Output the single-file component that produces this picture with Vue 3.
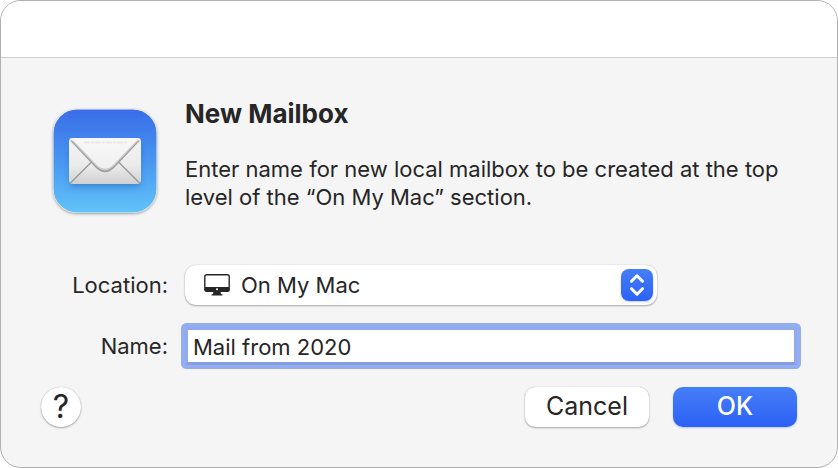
<template>
  <div class="dialog" role="dialog" aria-labelledby="dialog-title">
    <header class="title-bar"></header>

    <form class="content" @submit.prevent>
      <section class="intro">
        <!-- Mail icon -->
        <svg class="app-icon" viewBox="0 0 104 104" aria-hidden="true">
          <defs>
            <linearGradient id="sky" x1="0" y1="0" x2="0" y2="1">
              <stop offset="0" stop-color="#3b6de9" />
              <stop offset="0.5" stop-color="#4896f0" />
              <stop offset="1" stop-color="#62c3f9" />
            </linearGradient>
            <linearGradient id="paper" x1="0" y1="0" x2="0" y2="1">
              <stop offset="0" stop-color="#f4f4f4" />
              <stop offset="0.6" stop-color="#ebebeb" />
              <stop offset="1" stop-color="#d0d0d0" />
            </linearGradient>
            <linearGradient id="flap" x1="0" y1="0" x2="0" y2="1">
              <stop offset="0" stop-color="#f8f8f8" />
              <stop offset="1" stop-color="#efefef" />
            </linearGradient>
            <filter id="soft" x="-20%" y="-20%" width="140%" height="150%">
              <feGaussianBlur stdDeviation="3" />
            </filter>
            <clipPath id="envelope">
              <rect x="16" y="29" width="72" height="46" rx="4" />
            </clipPath>
          </defs>
          <rect x="0.5" y="0.5" width="103" height="103" rx="23.5" fill="url(#sky)" />
          <rect x="17" y="35" width="70" height="43" rx="4" fill="#17539c" opacity="0.4" filter="url(#soft)" />
          <g clip-path="url(#envelope)" fill="none">
            <rect x="16" y="29" width="72" height="46" fill="url(#paper)" />
            <path d="M17.500 74 L38.500 53 M86.500 74 L65.500 53" stroke="#9c9c9c" stroke-width="1.500" />
            <path d="M18 31 L43 57.500 Q52 67 61 57.500 L86 31" stroke="#a0a0a0" stroke-width="2.200" />
            <path d="M18 30 L43 56 Q52 65 61 56 L86 30 Z" fill="url(#flap)" stroke="#cccccc" stroke-width="1.200" />
            <path d="M16 29 H88 V31.200 H16 Z" fill="#f7f7f7" />
            <path d="M31 33.500 H74" stroke="#e4e4e4" stroke-width="1.500" stroke-dasharray="6 1 3 1" />
          </g>
        </svg>

        <div class="message">
          <h1 id="dialog-title">New Mailbox</h1>
          <p>Enter name for new local mailbox to be created at the top level of the “On My Mac” section.</p>
        </div>
      </section>

      <div class="fields">
        <label for="location">Location:</label>
        <div class="popup">
          <select id="location" v-model="location">
            <option v-for="item in locations" :key="item" :value="item">{{ item }}</option>
          </select>
          <svg class="display-icon" viewBox="0 0 26 22" aria-hidden="true">
            <rect x="0.800" y="0.800" width="24.400" height="16.400" rx="1.800" fill="#fff" stroke="#262626" stroke-width="1.400" />
            <path d="M1 13 H25 V16 Q25 17.500 23.500 17.500 H2.500 Q1 17.500 1 16 Z" fill="#262626" />
            <circle cx="13" cy="15.300" r="1" fill="#fff" />
            <path d="M9.500 17.500 H16.500 L17 20 L18.500 20.500 V21.500 H7.500 V20.500 L9 20 Z" fill="#262626" />
          </svg>
          <span class="arrows" aria-hidden="true">
            <svg viewBox="0 0 32 32">
              <path d="M10.500 12.300 L16 6.800 L21.500 12.300 M10.500 19.700 L16 25.200 L21.500 19.700" />
            </svg>
          </span>
        </div>

        <label for="name">Name:</label>
        <input id="name" v-model="name" type="text" autocomplete="off" spellcheck="false" />
      </div>

      <footer class="actions">
        <button type="button" class="help" aria-label="Help">?</button>
        <button type="button" class="btn">Cancel</button>
        <button type="submit" class="btn primary">OK</button>
      </footer>
    </form>
  </div>
</template>

<script setup>
import { ref } from 'vue'

const locations = ['On My Mac']
const location = ref(locations[0])
const name = ref('Mail from 2020')
</script>

<style>
body {
  background: #fff;
}
</style>

<style scoped>
.dialog {
  box-sizing: border-box;
  min-height: 100vh;
  border: 1px solid #b0b0b0;
  border-radius: 21px;
  overflow: hidden;
  background: #f5f5f5;
  color: #262626;
  font-family: Inter, "Liberation Sans", sans-serif;
  font-size: 22px;
  line-height: 28px;
}

.title-bar {
  height: 56px;
  background: #fff;
  border-bottom: 1px solid #cfcfcf;
}

.content {
  padding: 40px;
}

/* Icon and message */
.intro {
  display: flex;
  gap: 28px;
  padding: 0 0 0 12px;
}

.app-icon {
  flex: none;
  width: 104px;
  height: 104px;
  margin-top: 11px;
  border-radius: 24px;
  box-shadow: 0 1px 3px rgba(0, 0, 0, 0.35);
}

.message h1 {
  margin: 0 0 25px;
  font-size: 26px;
  font-weight: 700;
  line-height: 32px;
}

.message p {
  margin: 0;
}

/* Form fields */
.fields {
  display: grid;
  grid-template-columns: 127px 1fr;
  gap: 22px 17px;
  align-items: center;
  margin-top: 52px;
}

.fields label {
  text-align: right;
}

.popup {
  position: relative;
  max-width: 472px;
}

.popup select {
  display: block;
  box-sizing: border-box;
  width: 100%;
  height: 40px;
  padding: 0 48px 0 56px;
  border: 0;
  border-radius: 11px;
  outline: none;
  appearance: none;
  background: #fff;
  box-shadow: 0 0 1px rgba(0, 0, 0, 0.3), 0 1px 2px rgba(0, 0, 0, 0.3);
  color: inherit;
  font: inherit;
}

.display-icon {
  position: absolute;
  top: 9px;
  left: 19px;
  width: 26px;
  height: 22px;
  pointer-events: none;
}

.arrows {
  position: absolute;
  top: 4px;
  right: 4px;
  width: 32px;
  height: 32px;
  border-radius: 8px;
  background: linear-gradient(#457ef7, #2c61f6);
  box-shadow: 0 1px 2px rgba(44, 97, 246, 0.3);
  pointer-events: none;
}

.arrows svg {
  display: block;
  fill: none;
  stroke: #fff;
  stroke-width: 3;
  stroke-linecap: round;
  stroke-linejoin: round;
}

.fields input {
  box-sizing: border-box;
  width: 100%;
  height: 38px;
  padding: 1px 5px 0;
  border: 3px solid #90aaee;
  border-bottom-color: #839ee2;
  outline: none;
  border-radius: 2px;
  background: #fff;
  box-shadow: 0 0 0 4px #94adef;
  color: inherit;
  font: inherit;
}

/* Buttons */
.actions {
  display: flex;
  gap: 24px;
  margin-top: 22px;
}

.btn,
.help {
  height: 40px;
  padding: 0 0 2px;
  border: 0;
  background: #fff;
  box-shadow: 0 0 1px rgba(0, 0, 0, 0.3), 0 1px 2px rgba(0, 0, 0, 0.3);
  color: inherit;
  font: inherit;
  font-size: 25px;
}

.btn {
  width: 124px;
  border-radius: 10px;
}

.help {
  width: 40px;
  margin-right: auto;
  padding: 0;
  border-radius: 50%;
  font-size: 32px;
}

.primary {
  background: linear-gradient(#457ef7, #2c61f6);
  box-shadow: 0 1px 2px rgba(44, 97, 246, 0.3);
  color: #fff;
  font-weight: 500;
}
</style>
